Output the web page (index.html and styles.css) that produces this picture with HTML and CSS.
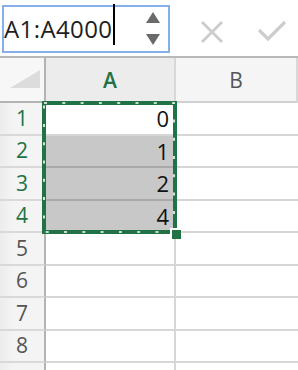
FILE: index.html
```html
<!DOCTYPE html>
<html>
<head>
<meta charset="utf-8">
<link rel="stylesheet" href="styles.css">
</head>
<body>
<div class="toolbar">
  <div class="namebox">
    <span class="nametext">A1:A4000</span><span class="caret"></span>
    <div class="spin">
      <svg width="14" height="34" viewBox="0 0 14 34"><polygon points="7,0 14,11 0,11" fill="#6a6a6a"/><polygon points="0,22 14,22 7,33" fill="#6a6a6a"/></svg>
    </div>
  </div>
  <div class="actions">
    <svg class="icon" width="24" height="24" viewBox="0 0 24 24"><path d="M2 2 L22 22 M22 2 L2 22" stroke="#cdcdcd" stroke-width="3" fill="none"/></svg>
    <svg class="icon" width="30" height="24" viewBox="0 0 30 24"><path d="M2 10 L11 19 L28 2" stroke="#cdcdcd" stroke-width="3.2" fill="none"/></svg>
  </div>
</div>
<div class="sheet">
  <div class="grid">
    <div class="corner"><span class="tri"></span></div>
    <div class="colhead active">A</div>
    <div class="colhead">B</div>

    <div class="rowhead active">1</div>
    <div class="cell">0</div>
    <div class="cell b"></div>

    <div class="rowhead active">2</div>
    <div class="cell sel">1</div>
    <div class="cell b"></div>

    <div class="rowhead active">3</div>
    <div class="cell sel">2</div>
    <div class="cell b"></div>

    <div class="rowhead active">4</div>
    <div class="cell sel">4</div>
    <div class="cell b"></div>

    <div class="rowhead">5</div>
    <div class="cell"></div>
    <div class="cell b"></div>

    <div class="rowhead">6</div>
    <div class="cell"></div>
    <div class="cell b"></div>

    <div class="rowhead">7</div>
    <div class="cell"></div>
    <div class="cell b"></div>

    <div class="rowhead">8</div>
    <div class="cell"></div>
    <div class="cell b"></div>

    <div class="rowhead"></div>
    <div class="cell"></div>
    <div class="cell b"></div>
  </div>
  <div class="selection">
    <svg class="ants" width="134" height="133" viewBox="0 0 134 133"><rect x="2" y="2" width="130" height="129" fill="none" stroke="#ffffff" stroke-width="1.6" stroke-dasharray="3 15.3"/></svg>
  </div>
  <div class="handle"></div>
</div>
</body>
</html>
```
FILE: styles.css
```css
html, body {
  margin: 0;
  padding: 0;
}
body {
  width: 298px;
  height: 370px;
  overflow: hidden;
  background: #ffffff;
  font-family: "Open Sans", "Liberation Sans", sans-serif;
}
.toolbar {
  height: 56px;
  border-bottom: 2px solid #b8b8b8;
  display: flex;
  align-items: flex-start;
  background: #ffffff;
}
.namebox {
  margin: 5px 0 0 2px;
  width: 168px;
  height: 48px;
  box-sizing: border-box;
  border: 2px solid #86aee9;
  display: flex;
  align-items: center;
  position: relative;
}
.nametext {
  font-size: 24px;
  color: #1e1e1e;
  padding-left: 0;
  letter-spacing: 0.4px;
  line-height: 1;
}
.caret {
  width: 2px;
  height: 41px;
  background: #000;
  margin-left: 1px;
  align-self: flex-start;
  margin-top: -3px;
}
.spin {
  margin-left: auto;
  margin-right: 8px;
  display: flex;
  align-items: center;
}
.actions {
  display: flex;
  align-items: center;
  gap: 33px;
  margin-left: 30px;
  margin-top: 20px;
}
.sheet {
  position: relative;
}
.grid {
  display: grid;
  grid-template-columns: 46px 130px 1fr;
  grid-template-rows: 45px repeat(9, 32.5px);
}
.grid > div {
  box-sizing: border-box;
  display: flex;
  align-items: center;
}
.corner {
  background: #f7f7f7;
  border-right: 2px solid #b3b3b3;
  border-bottom: 2px solid #b3b3b3;
  position: relative;
}
.tri {
  position: absolute;
  left: 10px;
  top: 12px;
  width: 0;
  height: 0;
  border-left: 30px solid transparent;
  border-bottom: 18px solid #dcdcdc;
}
.colhead {
  justify-content: center;
  background: #f5f5f5;
  border-right: 2px solid #d8d8d8;
  border-bottom: 2px solid #d0d0d0;
  font-size: 21px;
  color: #555555;
}
.colhead.active {
  background: #ececec;
  color: #217346;
  font-weight: 600;
}
.rowhead {
  justify-content: center;
  background: linear-gradient(to right, #ececec, #f4f4f4 30%);
  border-right: 2px solid #b3b3b3;
  border-bottom: 2px solid #d9d9d9;
  font-size: 21px;
  color: #555555;
  padding-bottom: 1px;
}
.rowhead.active {
  color: #217346;
}
.cell {
  justify-content: flex-end;
  padding-right: 5px;
  border-right: 2px solid #d6d6d6;
  border-bottom: 2px solid #d6d6d6;
  font-size: 22px;
  color: #111111;
}
.cell.b {
  border-right: none;
}
.cell.sel {
  background: #c8c8c8;
  border-bottom-color: #a9a9a9;
}
.selection {
  position: absolute;
  left: 42px;
  top: 43px;
  width: 135px;
  height: 133px;
  box-sizing: border-box;
  border: 4px solid #217346;
}
.ants {
  position: absolute;
  left: -4px;
  top: -4px;
}
.handle {
  position: absolute;
  left: 170px;
  top: 170px;
  width: 9px;
  height: 9px;
  background: #217346;
  border-left: 2px solid #ffffff;
  border-top: 2px solid #ffffff;
}
```
